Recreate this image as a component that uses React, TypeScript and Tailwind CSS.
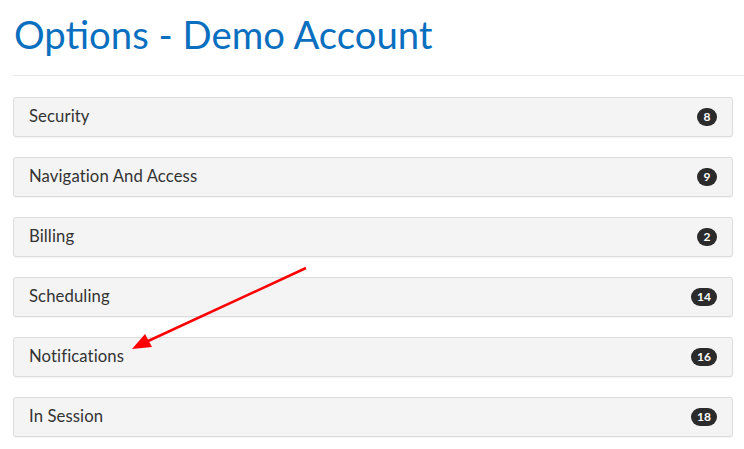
import React from 'react';

const sections = [
  { name: 'Security', count: 8 },
  { name: 'Navigation And Access', count: 9 },
  { name: 'Billing', count: 2 },
  { name: 'Scheduling', count: 14 },
  { name: 'Notifications', count: 16 },
  { name: 'In Session', count: 18 },
];

export default function App() {
  return (
    <div className="relative min-h-[449px] bg-white pl-[13px] pr-[11px]" style={{ fontFamily: 'Lato, "Open Sans", sans-serif' }}>
      <h1 className="pt-[12px] pl-px text-[38.3px] leading-[44px] text-[#0a6fbf] font-normal">Options - Demo Account</h1>
      <div className="mt-[19px] h-px bg-[#e8e8e8] -mr-[11px]" />
      <div className="mt-[21px] flex flex-col gap-5">
        {sections.map((s) => (
          <div
            key={s.name}
            className="flex h-10 items-center justify-between rounded-[3px] border border-[#dcdcdc] bg-[#f4f4f4] pl-[15px] pr-[15px] shadow-[0_1px_1px_rgba(0,0,0,0.04)]"
          >
            <span className="text-[16.7px] tracking-[0.1px] text-[#333]">{s.name}</span>
            <span className="flex h-[18px] min-w-[20px] items-center justify-center rounded-full bg-[#2b2b2b] px-[6px] text-[12px] font-bold text-white">
              {s.count}
            </span>
          </div>
        ))}
      </div>
      <svg className="absolute left-0 top-0 pointer-events-none" width="744" height="449">
        <line x1="306" y1="268" x2="146" y2="342" stroke="#ff0000" strokeWidth="2.5" />
        <polygon points="132,349 145,334 152,347" fill="#ff0000" />
      </svg>
    </div>
  );
}
